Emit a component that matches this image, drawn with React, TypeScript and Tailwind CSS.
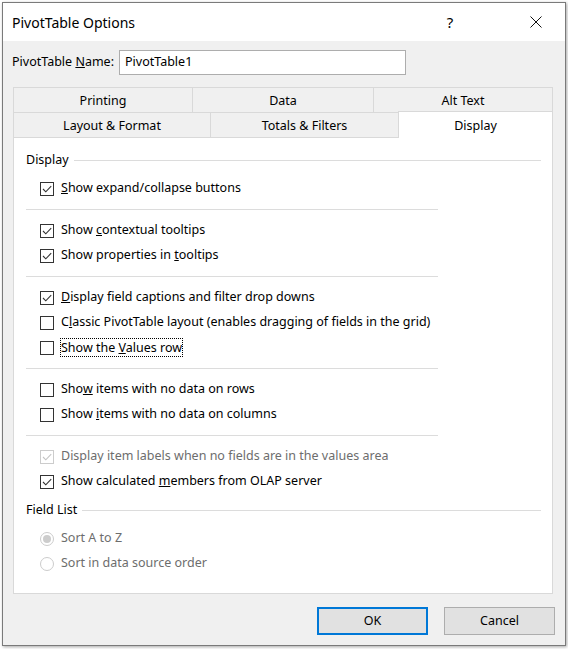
import clsx from "clsx";

type Item = {
  label: React.ReactNode;
  checked?: boolean;
  disabled?: boolean;
  focused?: boolean;
};

const groups: Item[][] = [
  [{ label: <><u>S</u>how expand/collapse buttons</>, checked: true }],
  [
    { label: <>Show <u>c</u>ontextual tooltips</>, checked: true },
    { label: <>Show properties in <u>t</u>ooltips</>, checked: true },
  ],
  [
    { label: <><u>D</u>isplay field captions and filter drop downs</>, checked: true },
    { label: <>C<u>l</u>assic PivotTable layout (enables dragging of fields in the grid)</> },
    { label: <>Show the <u>V</u>alues row</>, focused: true },
  ],
  [
    { label: <>Sho<u>w</u> items with no data on rows</> },
    { label: <>Show <u>i</u>tems with no data on columns</> },
  ],
  [
    { label: "Display item labels when no fields are in the values area", checked: true, disabled: true },
    { label: <>Show calculated <u>m</u>embers from OLAP server</>, checked: true },
  ],
];

const CheckBox = ({ checked, disabled }: { checked?: boolean; disabled?: boolean }) => (
  <span
    className={clsx(
      "w-[14px] h-[14px] border bg-white flex items-center justify-center shrink-0",
      disabled ? "border-[#cccccc]" : "border-[#333333]"
    )}
  >
    {checked && (
      <svg width="12" height="12" viewBox="0 0 12 12">
        <path
          d="M2 6 L4.8 8.8 L10.2 3.2"
          fill="none"
          stroke={disabled ? "#c4c4c4" : "#333333"}
          strokeWidth="1.1"
        />
      </svg>
    )}
  </span>
);

const Radio = ({ selected }: { selected?: boolean }) => (
  <span className="w-[14px] h-[14px] rounded-full border border-[#cccccc] bg-white flex items-center justify-center shrink-0">
    {selected && <span className="w-[8px] h-[8px] rounded-full bg-[#cccccc]" />}
  </span>
);

const GroupHeader = ({ title }: { title: string }) => (
  <div className="h-[22px] flex items-center pl-[12px] pr-[11px] gap-[5px]">
    <span>{title}</span>
    <span className="flex-1 h-px bg-[#dcdcdc]" />
  </div>
);

const Row = ({ item }: { item: Item }) => (
  <div className="h-[25px] flex items-center pl-[26px] gap-[7px]">
    <CheckBox checked={item.checked} disabled={item.disabled} />
    <span
      className={clsx(
        item.disabled && "text-[#6d6d6d]",
        item.focused && "border border-dotted border-black -ml-px leading-[17px]"
      )}
    >
      {item.label}
    </span>
  </div>
);

export default function App() {
  return (
    <div className="w-[568px] h-[649px] bg-white pt-[2px] pl-[2px] text-[12.5px] text-black font-['Segoe_UI','Noto_Sans',sans-serif]">
      <div className="w-[564px] h-[644px] border border-[#7a7a7a] bg-[#f0f0f0] flex flex-col shadow-[1px_1px_3px_rgba(0,0,0,0.35)]">
        {/* title bar */}
        <div className="h-[38px] bg-white flex items-center shrink-0">
          <span className="pl-[9px] text-[14px]">PivotTable Options</span>
          <div className="ml-auto flex h-full">
            <span className="w-[114px] flex items-center justify-center text-[15px]">?</span>
            <span className="w-[58px] flex items-center justify-center">
              <svg width="12" height="12" viewBox="0 0 12 12">
                <path d="M0.5 0.5 L11.5 11.5 M11.5 0.5 L0.5 11.5" stroke="#111" strokeWidth="1" />
              </svg>
            </span>
          </div>
        </div>

        {/* name */}
        <div className="mt-[9px] h-[25px] flex items-center pl-[9px]">
          <span className="w-[107px]">
            PivotTable <u>N</u>ame:
          </span>
          <div className="w-[287px] h-[25px] border border-[#adadad] bg-white flex items-center pl-[5px]">
            PivotTable1
          </div>
        </div>

        {/* tabs */}
        <div className="mt-[12px] ml-[10px] w-[540px]">
          <div className="flex h-[25px]">
            <div className="w-[179px] pt-[3px] border-t border-l border-[#d9d9d9] flex items-center justify-center">Printing</div>
            <div className="w-[181px] pt-[3px] border-t border-l border-[#d9d9d9] flex items-center justify-center">Data</div>
            <div className="w-[180px] pt-[3px] border-t border-l border-r border-[#d9d9d9] flex items-center justify-center">Alt Text</div>
          </div>
          <div className="flex h-[25px] items-start">
            <div className="w-[197px] h-[25px] pt-[3px] border-t border-l border-[#d9d9d9] flex items-center justify-center">Layout &amp; Format</div>
            <div className="w-[188px] h-[25px] pt-[3px] border-t border-l border-[#d9d9d9] flex items-center justify-center">Totals &amp; Filters</div>
            <div className="relative z-10 w-[155px] h-[27px] -mt-px pt-[2px] bg-white border-t border-l border-r border-[#d9d9d9] flex items-center justify-center">Display</div>
          </div>

          {/* panel */}
          <div className="h-[457px] bg-white border border-[#d9d9d9] pt-[11px]">
            <GroupHeader title="Display" />
            <div className="mt-[5px]">
              {groups.map((g, gi) => (
                <div key={gi}>
                  {gi > 0 && (
                    <div className="h-[17px] flex items-center pl-[12px]">
                      <span className="w-[412px] h-px bg-[#dcdcdc]" />
                    </div>
                  )}
                  {g.map((item, i) => (
                    <Row key={i} item={item} />
                  ))}
                </div>
              ))}
            </div>
            <div className="mt-[5px]">
              <GroupHeader title="Field List" />
            </div>
            <div className="mt-[5px] text-[#6d6d6d]">
              <div className="h-[25px] flex items-center pl-[26px] gap-[7px]">
                <Radio selected />
                <span>Sort A to Z</span>
              </div>
              <div className="h-[25px] flex items-center pl-[26px] gap-[7px]">
                <Radio />
                <span>Sort in data source order</span>
              </div>
            </div>
          </div>
        </div>

        {/* buttons */}
        <div className="mt-[13px] flex justify-end gap-[16px] pr-[10px]">
          <button className="w-[111px] h-[28px] bg-[#e1e1e1] border-2 border-[#0078d7]">OK</button>
          <button className="w-[111px] h-[28px] bg-[#e1e1e1] border border-[#adadad]">Cancel</button>
        </div>
      </div>
    </div>
  );
}
